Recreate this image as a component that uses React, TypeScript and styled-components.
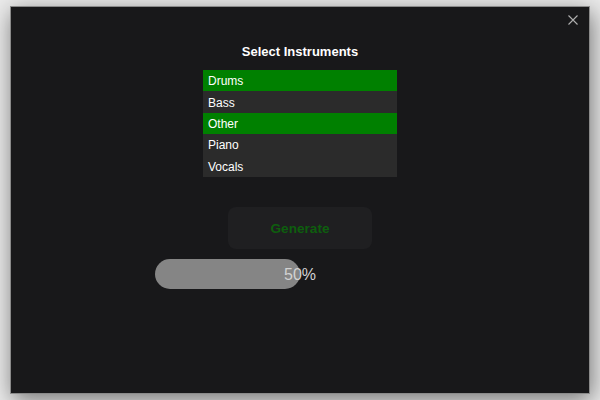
import React from "react";
import styled, { createGlobalStyle } from "styled-components";

const Global = createGlobalStyle`
  html, body { margin: 0; padding: 0; }
  body {
    background: #ebebeb;
    width: 600px;
    height: 400px;
    overflow: hidden;
    font-family: "Liberation Sans", Arial, sans-serif;
  }
`;

const Page = styled.div`
  width: 600px;
  height: 400px;
  box-sizing: border-box;
  padding: 6px 10px;
`;

const Modal = styled.div`
  position: relative;
  box-sizing: border-box;
  width: 580px;
  height: 388px;
  background: #18181a;
  border: 1px solid #8a8a8a;
  box-shadow: 2px 6px 22px rgba(0, 0, 0, 0.5);
  display: flex;
  flex-direction: column;
  align-items: center;
  padding-top: 37px;
`;

const Close = styled.button`
  position: absolute;
  top: 6px;
  right: 9px;
  width: 14px;
  height: 14px;
  padding: 0;
  border: none;
  background: transparent;
  display: flex;
  align-items: center;
  justify-content: center;
  cursor: pointer;
`;

const Title = styled.h2`
  margin: 0;
  font-size: 13px;
  line-height: 16px;
  font-weight: bold;
  color: #ffffff;
`;

const List = styled.ul`
  list-style: none;
  margin: 10px 0 0;
  padding: 0;
  width: 194px;
  background: #2b2b2b;
`;

const Item = styled.li<{ $selected?: boolean }>`
  height: 21.4px;
  display: flex;
  align-items: center;
  padding: 1px 5px 0;
  box-sizing: border-box;
  font-size: 12px;
  color: #ffffff;
  background: ${(p) => (p.$selected ? "#008000" : "transparent")};
`;

const GenerateButton = styled.button`
  margin-top: 30px;
  width: 144px;
  height: 42px;
  padding: 1px 0 0;
  border: none;
  border-radius: 8px;
  background: #1f1f21;
  color: #0e5e0e;
  font-family: "Liberation Sans", Arial, sans-serif;
  font-weight: bold;
  font-size: 13.6px;
`;

const Progress = styled.div`
  margin-top: 10px;
  position: relative;
  width: 290px;
  height: 30px;
  display: flex;
  align-items: center;
  justify-content: center;
`;

const Fill = styled.div`
  position: absolute;
  left: 0;
  top: 0;
  height: 100%;
  background: #858585;
  border-radius: 15px;
`;

const Percent = styled.span`
  position: relative;
  top: 1px;
  font-size: 16px;
  color: #d2d2d2;
`;

const instruments = [
  { name: "Drums", selected: true },
  { name: "Bass", selected: false },
  { name: "Other", selected: true },
  { name: "Piano", selected: false },
  { name: "Vocals", selected: false },
];

export default function App() {
  const progress = 50;
  return (
    <Page>
      <Global />
      <Modal>
        <Close aria-label="Close">
          <svg width="10" height="10" viewBox="0 0 10 10">
            <path d="M0.5 0.5 L9.5 9.5 M9.5 0.5 L0.5 9.5" stroke="#b0b0b0" strokeWidth="1.1" />
          </svg>
        </Close>
        <Title>Select Instruments</Title>
        <List>
          {instruments.map((i) => (
            <Item key={i.name} $selected={i.selected}>
              {i.name}
            </Item>
          ))}
        </List>
        <GenerateButton disabled>Generate</GenerateButton>
        <Progress>
          <Fill style={{ width: `${progress}%` }} />
          <Percent>{progress}%</Percent>
        </Progress>
      </Modal>
    </Page>
  );
}
